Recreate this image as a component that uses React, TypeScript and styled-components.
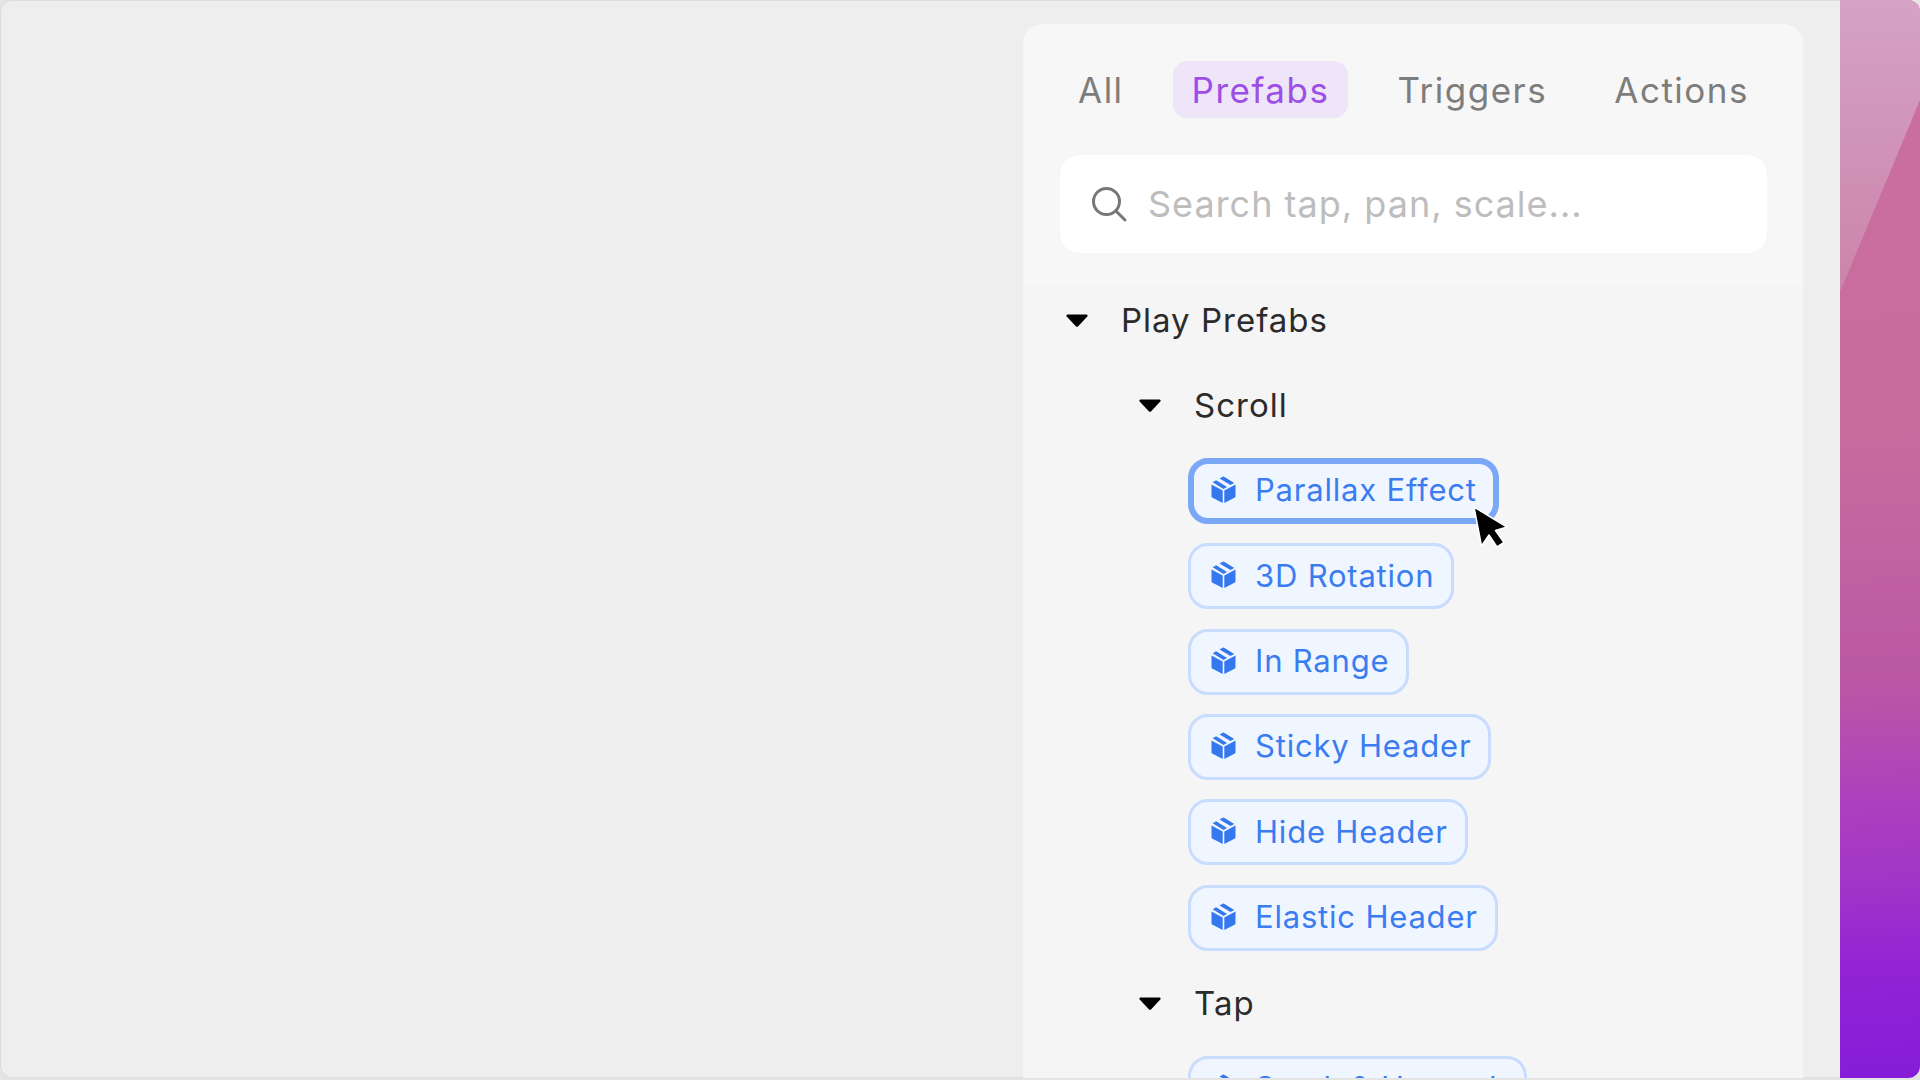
import React from "react";
import styled, { createGlobalStyle } from "styled-components";

const Global = createGlobalStyle`
  html, body { margin: 0; padding: 0; background: #e4e4e4; }
  body { font-family: Inter, "Liberation Sans", sans-serif; overflow: hidden; }
`;

const Screen = styled.div`
  width: 1920px;
  height: 1078px;
  display: flex;
  overflow: hidden;
  border-radius: 12px;
  background: #eeeeee;
  box-shadow: inset 0 0 0 1px #dddddd;
`;

const Stage = styled.main`
  flex: 1;
  display: flex;
  justify-content: flex-end;
  padding: 24px 37px 0 0;
  min-width: 0;
`;

const Wallpaper = styled.aside`
  width: 80px;
  flex: none;
  position: relative;
  background: linear-gradient(178deg, #cb6f9f 0%, #c86c9e 40%, #ba58a4 63%, #ad40bd 74%, #a035c8 82%, #9424d4 89%, #841cd8 100%);
`;

const Sheen = styled.svg`
  position: absolute;
  inset: 0;
  width: 100%;
  height: 300px;
`;

const Panel = styled.section`
  width: 780px;
  height: 1056px;
  background: #f5f5f5;
  border-radius: 20px 20px 0 0;
  position: relative;
  overflow: hidden;
`;

const Header = styled.header`
  background: #f7f7f7;
  padding: 37px 36px 32px 37px;
`;

const Tabs = styled.nav`
  display: flex;
  align-items: center;
  height: 57px;
`;

const Tab = styled.div<{ $active?: boolean; $gap: number }>`
  height: 57px;
  display: flex;
  align-items: center;
  padding: 0 ${(p) => (p.$active ? 19 : 18)}px;
  margin-right: ${(p) => p.$gap}px;
  border-radius: 14px;
  font-size: 35px;
  font-weight: 400;
  letter-spacing: 1.5px;
  color: ${(p) => (p.$active ? "#9d4ee6" : "#7d7d7d")};
  background: ${(p) => (p.$active ? "#eee5f8" : "transparent")};
`;

const Search = styled.div`
  margin-top: 37px;
  height: 98px;
  background: #ffffff;
  border-radius: 20px;
  display: flex;
  align-items: center;
  padding-left: 30px;
  gap: 20px;
`;

const SearchIcon = styled.svg`
  width: 38px;
  height: 38px;
  flex: none;
  color: #777777;
`;

const Placeholder = styled.span`
  font-size: 36px;
  letter-spacing: 1px;
  color: #bdbdbd;
`;

const Tree = styled.div`
  padding: 2px 37px 0;
`;

const Row = styled.div<{ $depth: number }>`
  height: 66px;
  margin-bottom: 19.4px;
  display: flex;
  align-items: center;
  padding-left: ${(p) => (p.$depth === 0 ? 6 : 79)}px;
  font-size: 33px;
  font-weight: 400;
  letter-spacing: 1px;
  color: #2b2b2b;
`;

const Caret = styled.svg`
  width: 22px;
  height: 13px;
  flex: none;
  margin-right: 33px;
  color: #000000;
`;

const ChipRow = styled.div`
  height: 66px;
  margin-bottom: 19.4px;
  padding-left: 128px;
  display: flex;
`;

const Chip = styled.div<{ $focus?: boolean }>`
  height: 66px;
  box-sizing: border-box;
  display: flex;
  align-items: center;
  gap: 18px;
  padding: 0 ${(p) => (p.$focus ? 16 : 17)}px 2px ${(p) => (p.$focus ? 16 : 19)}px;
  border-radius: 20px;
  background: #f0f6ff;
  border: ${(p) => (p.$focus ? "6px solid #7ba7f7" : "3px solid #c8dcfd")};
  font-size: 31px;
  letter-spacing: 0.8px;
  color: #3b7df1;
  white-space: nowrap;
`;

const BoxIcon = styled.svg`
  width: 27px;
  height: 28px;
  flex: none;
  color: #3578ee;
`;

const Cursor = styled.svg`
  position: absolute;
  left: 1470px;
  top: 504px;
  width: 40px;
  height: 46px;
`;

const Box = () => (
  <BoxIcon viewBox="0 0 26 28" fill="currentColor">
    <path d="M1 8.5 12.2 14.6V27L1.6 21.4C1.2 21.2 1 20.8 1 20.3Z" />
    <path d="M25 8.5 13.8 14.6V27L24.4 21.4C24.8 21.2 25 20.8 25 20.3Z" />
    <path d="M5.6 4.3 2.2 6.2 13 12.9l3.6-2ZM9 2.4 20 9.1l3.8-2.2L13.6.7c-.4-.2-.9-.2-1.300 0Z" />
  </BoxIcon>
);

const Down = () => (
  <Caret viewBox="0 0 22 13">
    <path d="M1.500 0.500H20.500C21.500 0.500 22 1.600 21.300 2.400L12.200 12.200C11.500 12.900 10.500 12.900 9.800 12.200L0.700 2.400C0 1.600 0.500 0.500 1.500 0.500Z" fill="currentColor" />
  </Caret>
);

const scrollItems = ["Parallax Effect", "3D Rotation", "In Range", "Sticky Header", "Hide Header", "Elastic Header"];

export default function App() {
  return (
    <>
      <Global />
      <Screen>
        <Stage>
          <Panel>
            <Header>
              <Tabs>
                <Tab $gap={31}>All</Tab>
                <Tab $active $gap={31}>Prefabs</Tab>
                <Tab $gap={31}>Triggers</Tab>
                <Tab $gap={0}>Actions</Tab>
              </Tabs>
              <Search>
                <SearchIcon viewBox="0 0 38 38" fill="none" stroke="currentColor" strokeWidth="3" strokeLinecap="round">
                  <circle cx="16.500" cy="16.500" r="13" />
                  <path d="M26 26 35 35" />
                </SearchIcon>
                <Placeholder>Search tap, pan, scale...</Placeholder>
              </Search>
            </Header>
            <Tree>
              <Row $depth={0}><Down />Play Prefabs</Row>
              <Row $depth={1}><Down />Scroll</Row>
              {scrollItems.map((name, i) => (
                <ChipRow key={name}>
                  <Chip $focus={i === 0}><Box />{name}</Chip>
                </ChipRow>
              ))}
              <Row $depth={1}><Down />Tap</Row>
              <ChipRow>
                <Chip><Box />Stack &amp; Unstack</Chip>
              </ChipRow>
            </Tree>
          </Panel>
        </Stage>
        <Wallpaper>
          <Sheen viewBox="0 0 80 300" preserveAspectRatio="none">
            <defs>
              <linearGradient id="sheen" x1="0" y1="0" x2="0" y2="1">
                <stop offset="0" stopColor="#d5a3c5" />
                <stop offset="1" stopColor="#cb84aa" />
              </linearGradient>
            </defs>
            <path d="M0 0H80V100L0 292Z" fill="url(#sheen)" />
          </Sheen>
        </Wallpaper>
      </Screen>
      <Cursor viewBox="0 0 40 46">
        <path d="M4 3 11.500 42 19 31 27 43 34 38.500 25.500 26.500 37 23Z" fill="#000" stroke="#fff" strokeWidth="1.500" strokeLinejoin="round" />
      </Cursor>
    </>
  );
}
